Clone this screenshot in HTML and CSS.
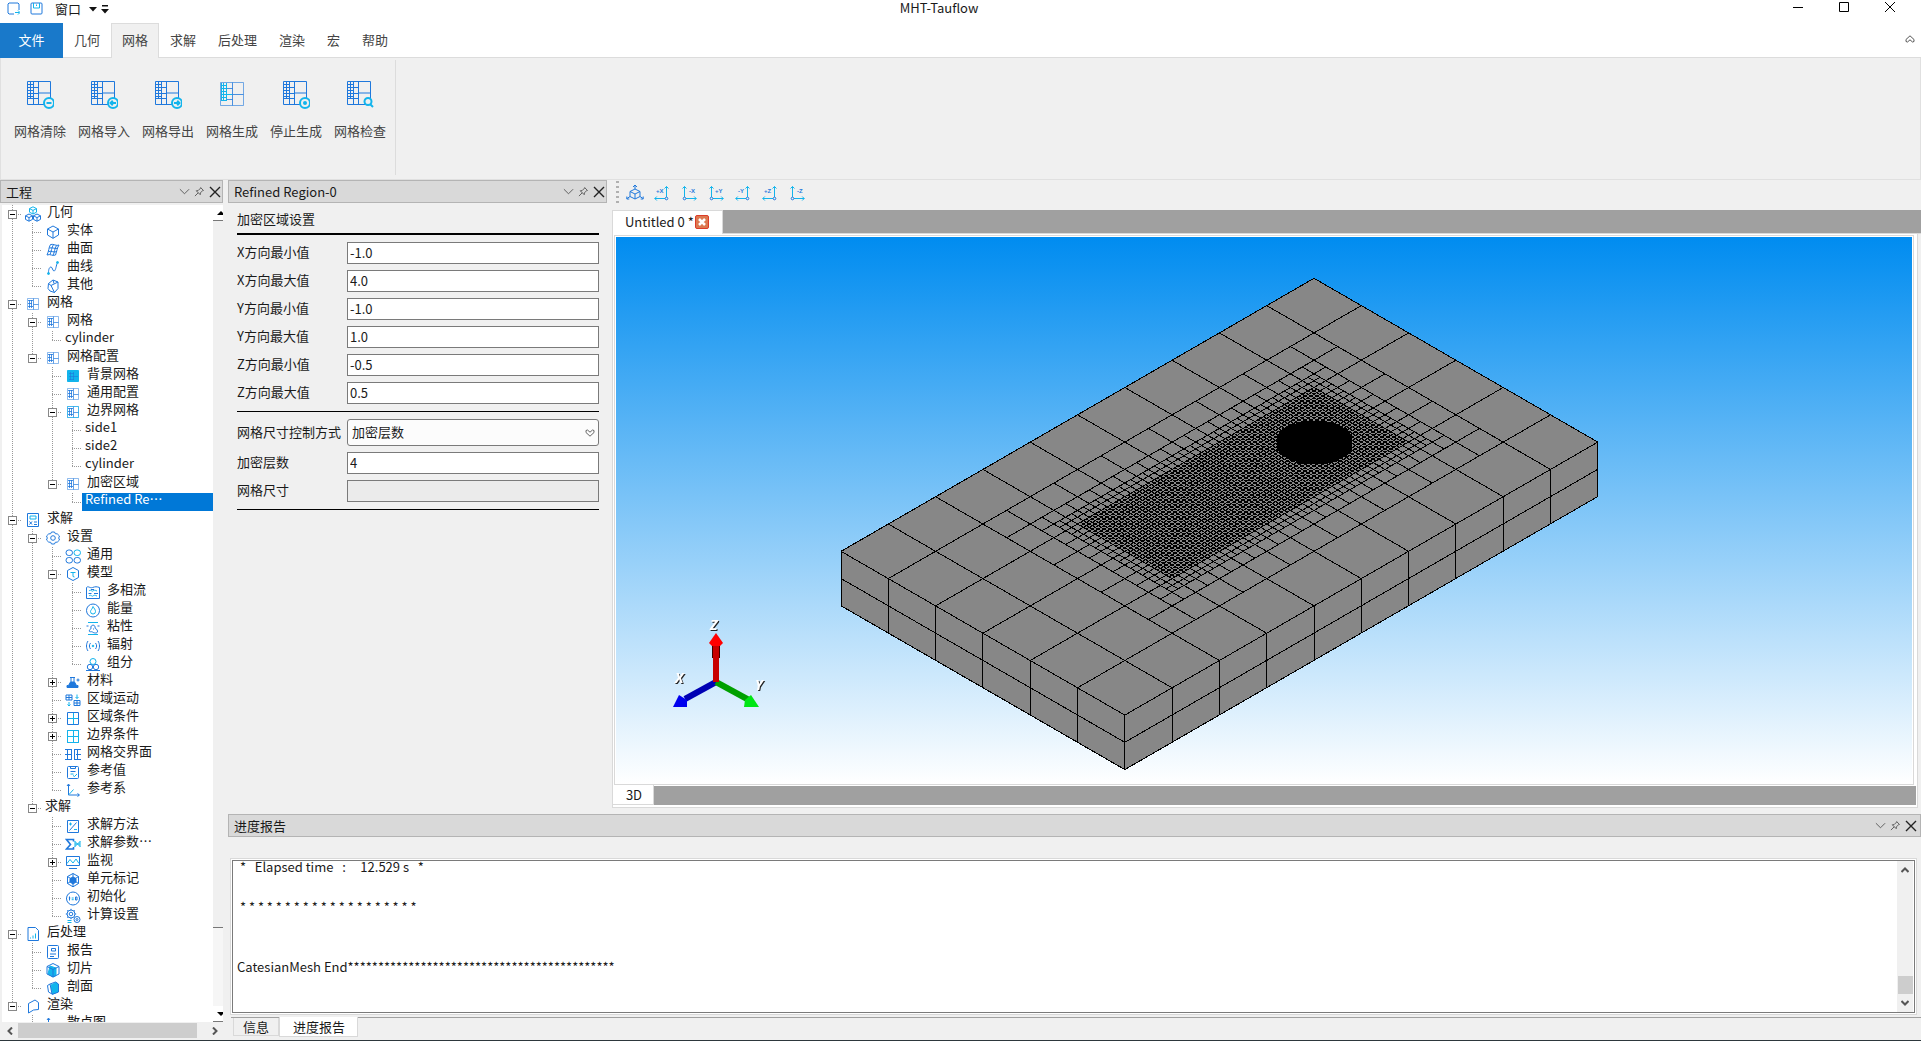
FILE: index.html
```html
<!DOCTYPE html>
<html lang="zh-CN">
<head>
<meta charset="utf-8">
<title>MHT-Tauflow</title>
<link rel="stylesheet" href="styles.css">
</head>
<body>
<svg class="sprite" aria-hidden="true">
  <symbol id="mesh-lg" viewBox="0 0 28 28"><path d="M1.500 .5 H24.500 V23.500 H1.500 Z M12.500 .5 V23.500 M7.500 .5 V23.500 M4.500 .5 V18 M12.500 12 H24.500 M1.500 6.500 H12.500 M1.500 17.500 H12.500 M1.500 3.500 H7.500 M1.500 9.500 H7.500 M1.500 12.500 H12.500 M1.500 15.500 H7.500"/></symbol>
  <symbol id="mesh-sm" viewBox="0 0 16 16"><path d="M2.500 2.500h11v11h-11z" opacity=".5"/><path d="M8.500 2.500v11M8.500 8.500h5" opacity=".7"/><path d="M3 4.500h5M3 7.500h4M3 10.500h5M4.500 4v8M6.500 4v8" opacity=".8"/></symbol>
  <symbol id="chev" viewBox="0 0 12 12"><path d="M1 3.500l5 5 5-5"/></symbol>
  <symbol id="pin" viewBox="0 0 12 12"><path d="M7 1.500l3.500 3.500M7.500 2L4.500 5 2.500 5.200 6.800 9.500 7 7.500 10 4.500M4.500 7.500L1 11"/></symbol>
  <symbol id="close" viewBox="0 0 12 12"><path d="M1 1l10 10M11 1L1 11"/></symbol>
  <symbol id="cubes" viewBox="0 0 16 16"><path class="cy" d="M8 .8l3.500 1.800v3.600L8 8 4.500 6.200V2.600zM4.500 2.600L8 4.400l3.500-1.800M8 4.400V8"/><path d="M4 8l3.500 1.800v3.600L4 15.200.5 13.400V9.800zM.5 9.800L4 11.600l3.500-1.800M4 11.600v3.600M12 8l3.500 1.800v3.600L12 15.200l-3.500-1.800V9.800zM8.500 9.800l3.500 1.800 3.500-1.800M12 11.600v3.600"/></symbol>
  <symbol id="cube" viewBox="0 0 16 16"><path d="M8 2l5.500 3v6L8 14.300 2.500 11V5zM2.500 5L8 8l5.500-3M8 8v6.300"/></symbol>
  <symbol id="surface" viewBox="0 0 16 16"><path d="M5.500 2.500c3-1 6 2 8.500.5-2 3-2 6-3.500 10-3 1.500-5-1.500-8.500 0 2-4 1.500-7 3.500-10.500zM8.500 2.500c-2 3-2 7-3.500 10M11.500 3.500c-2 3-2 7-3.500 10M4.500 6c3-1 6 1.500 8.500 0M3.500 9.500c3-1 5.500 1.500 8.500 0"/></symbol>
  <symbol id="curve" viewBox="0 0 16 16"><path d="M3.500 13c0-4 1-6 2.500-6s1.500 4 3 4S11 7 12 3.500"/><circle class="cf" cx="3.500" cy="13.500" r="1"/><circle class="cf" cx="12.500" cy="2.500" r="1"/></symbol>
  <symbol id="other" viewBox="0 0 16 16"><path d="M3.500 5.500L8 2l5 2v6.500L9.500 14.500 5 13 3 10.500zM3.500 5.500L6 7.500 9.500 14.500M6 7.500l7-3.500M8 2l1 3.500"/></symbol>
  <symbol id="calc" viewBox="0 0 16 16"><path d="M2.500 1.500h11v13h-11z"/><path class="cy" d="M5 4h6v3H5z"/><path d="M4.500 9.500l2.500 3M7 9.500l-2.500 3M9 10h3M9 12.500h3"/></symbol>
  <symbol id="gear" viewBox="0 0 16 16"><path d="M6.500 2h3l.8 1.700 2 .2L14.500 6l-.8 2 .8 2-2.200 2.100-2 .2L9.500 14h-3l-.8-1.700-2-.2L1.500 10l.8-2-.8-2 2.200-2.100 2-.2z"/><circle cx="8" cy="8" r="2.300"/></symbol>
  <symbol id="rings" viewBox="0 0 16 16"><rect x="1" y="2" width="6.500" height="5.500" rx="2.700"/><rect class="cy" x="9" y="2" width="6.500" height="5.500" rx="2.700"/><rect x="1" y="9.500" width="6.500" height="5.500" rx="2.700"/><rect x="9" y="9.500" width="6.500" height="5.500" rx="2.700"/></symbol>
  <symbol id="model" viewBox="0 0 16 16"><path d="M8 1.500l5.500 3v7L8 14.500l-5.500-3v-7z"/><path class="cy" d="M5.500 6.500h5M8 6.500v4l1.500.5"/></symbol>
  <symbol id="multi" viewBox="0 0 16 16"><path d="M1.500 3.500c2-2 3 1 6 0s4-1 7 0v11h-13z"/><path class="cy" d="M4 7c2-2 3 1 4 0s2-1 4 0M4 12c2-2 3 1 4 0s2-1 4 0"/><path d="M3.500 9.500h3M9 9.500h4M6 5.500h3"/></symbol>
  <symbol id="energy" viewBox="0 0 16 16"><circle cx="8" cy="8.500" r="6.500"/><path class="cy" d="M8 4.500c1 2 2.500 3 2.500 5A2.500 2.500 0 0 1 8 12a2.500 2.500 0 0 1-2.500-2.500C5.500 8 7.500 7 8 4.500z"/></symbol>
  <symbol id="viscous" viewBox="0 0 16 16"><path class="cy" d="M3 2.500h10M3 14.500h10"/><path d="M6 8c-1-3 4-4 4-1s2 1 2.500 4-4 2-5 1-4 1-3-2c.5-1 1.500-.5 1.500-2zM1.500 6h2M12.500 6h2M8 9h1"/></symbol>
  <symbol id="radiate" viewBox="0 0 16 16"><circle class="cf" cx="8" cy="8" r=".8"/><path d="M5.500 5c-1.500 2-1.500 4 0 6M10.500 5c1.500 2 1.500 4 0 6M3 3c-2 3-2 7 0 10M13 3c2 3 2 7 0 10"/></symbol>
  <symbol id="species" viewBox="0 0 16 16"><circle class="cy" cx="8" cy="5.500" r="3"/><circle cx="5" cy="11" r="2.700"/><circle cx="11" cy="11" r="2.700"/><path d="M1 14.500h14"/></symbol>
  <symbol id="material" viewBox="0 0 16 16"><path d="M5 3.500h5M6 4v4M9 4v4M11.500 6h3M13 4.500v3"/><path class="bf" d="M5.500 8h4l2 3.500H13v2H2v-2h1.500z"/></symbol>
  <symbol id="motion" viewBox="0 0 16 16"><path d="M1 3h6v5H1zM4 3v5M1 5.500h6M9 8.500h6v5H9zM12 8.500v5M9 11h6"/><path class="cy" d="M4 10v4M2.500 12.500L4 14l1.500-1.500M12 2.500v4M10.500 5L12 6.500 13.500 5"/></symbol>
  <symbol id="window" viewBox="0 0 16 16"><path d="M2.500 2.500h11v12h-11z"/><path class="cy" d="M8.500 3v11M3 8.500h10"/></symbol>
  <symbol id="interface" viewBox="0 0 16 16"><path d="M0 3.500h7M0 8.500h7M0 13.500h7M2.500 3.500v10M6.500 3.500v10M9.500 3v11M9.500 3.500H16M11 8.500h5M9.500 13.500H16M12.500 3.500v10"/></symbol>
  <symbol id="refval" viewBox="0 0 16 16"><rect x="2.500" y="2.500" width="11" height="12" rx="1"/><path d="M5.500 2.500v2h5v-2M5.500 7.500h5"/><path class="cy" d="M5.500 10h3M8 11.500l1.500 1 2.500-2.500"/></symbol>
  <symbol id="axes" viewBox="0 0 16 16"><path d="M3.500 2.500v10.500H14M2 4l1.500-2L5 4M12.500 11.500L14.500 13l-2 1.500"/><path class="cy" d="M4 12.500l4.500-5"/></symbol>
  <symbol id="method" viewBox="0 0 16 16"><path d="M2.500 2.500h11v12h-11zM4.500 12.500l7-8"/><path class="cy" d="M4 6h3M5.500 4.500v3M9 11.500h3"/></symbol>
  <symbol id="sigma" viewBox="0 0 16 16"><path d="M8.500 5.500V3.500H1.500L5.500 8.500l-4 4.500h7V11" stroke-width="1.600"/><path class="cy" d="M10 5.500l5 5M15 5.500l-5 5M10 5v6M15 5v6M10 8h5"/></symbol>
  <symbol id="monitor" viewBox="0 0 16 16"><path d="M1.500 2.500h13v9h-13zM4 14.500h8"/><path class="cy" d="M2 9.500l3-4 3 3.500 3-4 3 4.500"/></symbol>
  <symbol id="mark" viewBox="0 0 16 16"><path d="M8 1.500l5.500 3v7L8 14.800l-5.500-3.300v-7zM2.500 4.500l11 7M13.500 4.500l-11 7M8 1.500v13"/><path class="bf" d="M8 5l3 1.500v3.500L8 12l-3-2V6.500z"/></symbol>
  <symbol id="init" viewBox="0 0 16 16"><circle cx="8" cy="8.500" r="6.500"/><path d="M1 8.500h1M14 8.500h1M4.500 6.500v4M3.800 8h1.500M10.500 7h1.500v3h-1.500z"/><path class="cy" d="M6.700 8h2M6.700 9.700h2"/></symbol>
  <symbol id="gears" viewBox="0 0 16 16"><circle cx="6" cy="6" r="4"/><circle cx="6" cy="6" r="1.800"/><path d="M6 .8V2M6 10v1.200M.8 6H2M10 6h1.200M2.300 2.300l.9.900M9.700 2.300l-.9.900M2.300 9.700l.9-.9"/><circle cx="12" cy="11.500" r="3"/><circle cx="12" cy="11.500" r="1"/><path class="cy" d="M2.500 12.500h4M2.500 14.500h4"/></symbol>
  <symbol id="post" viewBox="0 0 16 16"><path d="M3 1.500h7.500l3 3v10H3z"/><path class="cf" d="M5.500 11.500v1M8 9.500v3M10.500 7.500v5"/></symbol>
  <symbol id="report" viewBox="0 0 16 16"><rect x="2.500" y="1.500" width="11" height="13" rx="1"/><path d="M5 10h6M5 12.500h4M6.500 4.500h4V7h-4z"/></symbol>
  <symbol id="slice" viewBox="0 0 16 16"><path class="cf" d="M5 4l6 2v7.500L8 15l-5-3z"/><path d="M8 1.500L14 4.500v7.500l-6 3-6-3V4.500zM2 4.500l6 3 6-3M8 7.500v7.500"/></symbol>
  <symbol id="section" viewBox="0 0 16 16"><path class="cf" d="M6 5l5-2.500 2 1.500v8L7.500 14z"/><path d="M2.500 5.500L5 4l2 10-3.500-2zM5 4l5.500-2 3 2v8L7 14.500"/></symbol>
  <symbol id="render" viewBox="0 0 16 16"><path d="M3.500 5.500L10 2l3.500 2.500v7l-5 .5-5 3z"/></symbol>
</svg>

<header class="titlebar">
  <div class="quick">
    <svg class="qicon" viewBox="0 0 13 13"><path d="M7 12H2L1 11V2l1-1h9l1 1v6"/><path class="cy" d="M8 10.500h4.500M11 8.500l2 2-2 2"/></svg>
    <svg class="qicon" viewBox="0 0 13 13"><rect x="1" y="1" width="11" height="11" rx="1"/><path class="cy" d="M3.500 1v5h6V1M6.500 2.500V4"/></svg>
    <span class="quick-label">窗口</span>
    <svg class="qarrow" viewBox="0 0 8 12"><path d="M0 4h8L4 8.500z"/></svg>
    <svg class="qarrow" viewBox="0 0 8 12"><path d="M1 2h6v1.500H1zM0 6h8l-4 4.500z"/></svg>
  </div>
  <h1 class="title">MHT-Tauflow</h1>
  <div class="winbtns">
    <button aria-label="最小化"><svg viewBox="0 0 12 12"><path d="M1 6.500h10"/></svg></button>
    <button aria-label="最大化"><svg viewBox="0 0 12 12"><path d="M1.500 1.500h9v9h-9z"/></svg></button>
    <button aria-label="关闭"><svg><use href="#close"/></svg></button>
  </div>
</header>

<nav class="menu">
  <button class="file">文件</button>
  <button>几何</button>
  <button class="on">网格</button>
  <button>求解</button>
  <button>后处理</button>
  <button>渲染</button>
  <button>宏</button>
  <button>帮助</button>
  <span class="fill"></span>
  <svg class="collapse" viewBox="0 0 10 8"><path d="M1 4.500L5 .8l4 3.700v2L7.500 7 5 4.800 2.500 7 1 6.500z"/></svg>
</nav>

<section class="ribbon">
  <div class="group">
    <button><svg class="rib" viewBox="0 0 28 28"><use href="#mesh-lg"/><g class="badge"><circle cx="23" cy="22" r="5"/><path d="M20.500 22h5"/></g></svg>网格清除</button>
    <button><svg class="rib" viewBox="0 0 28 28"><use href="#mesh-lg"/><g class="badge"><circle cx="23" cy="22" r="5"/><path d="M20.500 22h5.500M22.800 19.700L20.500 22l2.300 2.300"/></g></svg>网格导入</button>
    <button><svg class="rib" viewBox="0 0 28 28"><use href="#mesh-lg"/><g class="badge"><circle cx="23" cy="22" r="5"/><path d="M20 22h5.500M23.200 19.700l2.300 2.300-2.300 2.300"/></g></svg>网格导出</button>
    <button><svg class="rib" viewBox="0 0 28 28"><path d="M2.500 1.500 H25.500 V24.500 H2.500 Z" opacity=".6"/><path d="M14.500 1.500 V24.500 M14.500 13.500 H25.500 M8.500 7.500 H14.500 M8.500 18.500 H14.500" opacity=".8"/><path class="cy" d="M8.500 2 V19 M5.500 2 V19 M3.500 2 V19 M3 4.500 H9 M3 7.500 H9 M3 10.500 H9 M3 13.500 H14 M3 16.500 H9 M3 19.500 H9"/></svg>网格生成</button>
    <button><svg class="rib" viewBox="0 0 28 28"><use href="#mesh-lg"/><g class="badge"><circle cx="23" cy="22" r="5"/><circle class="cf" cx="23" cy="22" r="2"/></g></svg>停止生成</button>
    <button><svg class="rib" viewBox="0 0 28 28"><use href="#mesh-lg"/><g class="badge"><circle cx="22" cy="20.500" r="3.500"/><path d="M24.500 23.500l2.500 2.500"/></g></svg>网格检查</button>
  </div>
</section>

<main class="work">
  <aside class="dock project">
    <header class="dock-head"><h2>工程</h2><button aria-label="菜单"><svg><use href="#chev"/></svg></button><button aria-label="固定"><svg><use href="#pin"/></svg></button><button aria-label="关闭" class="x"><svg><use href="#close"/></svg></button></header>
    <div class="tree-wrap">
      <div class="tree-view">
      <ul class="tree">
        <li><div class="row"><button class="exp minus" aria-label="折叠"></button><svg><use href="#cubes"/></svg><span>几何</span></div>
          <ul>
            <li><div class="row"><i></i><svg><use href="#cube"/></svg><span>实体</span></div></li>
            <li><div class="row"><i></i><svg><use href="#surface"/></svg><span>曲面</span></div></li>
            <li><div class="row"><i></i><svg><use href="#curve"/></svg><span>曲线</span></div></li>
            <li><div class="row"><i></i><svg><use href="#other"/></svg><span>其他</span></div></li>
          </ul></li>
        <li><div class="row"><button class="exp minus" aria-label="折叠"></button><svg><use href="#mesh-sm"/></svg><span>网格</span></div>
          <ul>
            <li><div class="row"><button class="exp minus" aria-label="折叠"></button><svg><use href="#mesh-sm"/></svg><span>网格</span></div>
              <ul><li><div class="row"><i></i><span class="bare">cylinder</span></div></li></ul></li>
            <li><div class="row"><button class="exp minus" aria-label="折叠"></button><svg><use href="#mesh-sm"/></svg><span>网格配置</span></div>
              <ul>
                <li><div class="row"><i></i><svg viewBox="0 0 16 16"><path class="cf" d="M2.500 2.500h11v11h-11z"/><path d="M4 5.500h5M4 8.500h9M4 11.500h5M5.500 4v8M8.500 4v8" opacity=".6"/></svg><span>背景网格</span></div></li>
                <li><div class="row"><i></i><svg><use href="#mesh-sm"/></svg><span>通用配置</span></div></li>
                <li><div class="row"><button class="exp minus" aria-label="折叠"></button><svg viewBox="0 0 16 16"><use href="#mesh-sm"/><path class="cy" d="M2.500 2.500h11v11h-11z" opacity=".6"/></svg><span>边界网格</span></div>
                  <ul>
                    <li><div class="row"><i></i><span class="bare">side1</span></div></li>
                    <li><div class="row"><i></i><span class="bare">side2</span></div></li>
                    <li><div class="row"><i></i><span class="bare">cylinder</span></div></li>
                  </ul></li>
                <li><div class="row"><button class="exp minus" aria-label="折叠"></button><svg><use href="#mesh-sm"/></svg><span>加密区域</span></div>
                  <ul><li><div class="row"><i></i><span class="bare selected">Refined Re⋯</span></div></li></ul></li>
              </ul></li>
          </ul></li>
        <li><div class="row"><button class="exp minus" aria-label="折叠"></button><svg><use href="#calc"/></svg><span>求解</span></div>
          <ul>
            <li><div class="row"><button class="exp minus" aria-label="折叠"></button><svg><use href="#gear"/></svg><span>设置</span></div>
              <ul>
                <li><div class="row"><i></i><svg><use href="#rings"/></svg><span>通用</span></div></li>
                <li><div class="row"><button class="exp minus" aria-label="折叠"></button><svg><use href="#model"/></svg><span>模型</span></div>
                  <ul>
                    <li><div class="row"><i></i><svg><use href="#multi"/></svg><span>多相流</span></div></li>
                    <li><div class="row"><i></i><svg><use href="#energy"/></svg><span>能量</span></div></li>
                    <li><div class="row"><i></i><svg><use href="#viscous"/></svg><span>粘性</span></div></li>
                    <li><div class="row"><i></i><svg><use href="#radiate"/></svg><span>辐射</span></div></li>
                    <li><div class="row"><i></i><svg><use href="#species"/></svg><span>组分</span></div></li>
                  </ul></li>
                <li><div class="row"><button class="exp plus" aria-label="展开"></button><svg><use href="#material"/></svg><span>材料</span></div></li>
                <li><div class="row"><i></i><svg><use href="#motion"/></svg><span>区域运动</span></div></li>
                <li><div class="row"><button class="exp plus" aria-label="展开"></button><svg><use href="#window"/></svg><span>区域条件</span></div></li>
                <li><div class="row"><button class="exp plus" aria-label="展开"></button><svg viewBox="0 0 16 16"><use href="#window"/><path class="cy" d="M2.500 2.500h11v12h-11z"/></svg><span>边界条件</span></div></li>
                <li><div class="row"><i></i><svg><use href="#interface"/></svg><span>网格交界面</span></div></li>
                <li><div class="row"><i></i><svg><use href="#refval"/></svg><span>参考值</span></div></li>
                <li><div class="row"><i></i><svg><use href="#axes"/></svg><span>参考系</span></div></li>
              </ul></li>
            <li><div class="row"><button class="exp minus" aria-label="折叠"></button><span class="bare">求解</span></div>
              <ul>
                <li><div class="row"><i></i><svg><use href="#method"/></svg><span>求解方法</span></div></li>
                <li><div class="row"><i></i><svg><use href="#sigma"/></svg><span>求解参数⋯</span></div></li>
                <li><div class="row"><button class="exp plus" aria-label="展开"></button><svg><use href="#monitor"/></svg><span>监视</span></div></li>
                <li><div class="row"><i></i><svg><use href="#mark"/></svg><span>单元标记</span></div></li>
                <li><div class="row"><i></i><svg><use href="#init"/></svg><span>初始化</span></div></li>
                <li><div class="row"><i></i><svg><use href="#gears"/></svg><span>计算设置</span></div></li>
              </ul></li>
          </ul></li>
        <li><div class="row"><button class="exp minus" aria-label="折叠"></button><svg><use href="#post"/></svg><span>后处理</span></div>
          <ul>
            <li><div class="row"><i></i><svg><use href="#report"/></svg><span>报告</span></div></li>
            <li><div class="row"><i></i><svg><use href="#slice"/></svg><span>切片</span></div></li>
            <li><div class="row"><i></i><svg><use href="#section"/></svg><span>剖面</span></div></li>
          </ul></li>
        <li><div class="row"><button class="exp minus" aria-label="折叠"></button><svg><use href="#render"/></svg><span>渲染</span></div>
          <ul><li><div class="row"><i></i><svg><use href="#axes"/></svg><span>散点图</span></div></li></ul></li>
      </ul>
      </div>
      <div class="vbar">
        <span class="vbtn"><svg viewBox="0 0 8 4"><path d="M4 0l4 4H0z"/></svg></span>
        <span class="vthumb"></span>
        <span class="vtrack"></span>
        <span class="vbtn"><svg viewBox="0 0 8 4"><path d="M4 4l4-4H0z"/></svg></span>
      </div>
    </div>
    <div class="hbar"><svg viewBox="0 0 8 8"><path d="M6 .5L2.500 4 6 7.500"/></svg><span></span><svg viewBox="0 0 8 8"><path d="M2 .5L5.500 4 2 7.500"/></svg></div>
  </aside>

  <div class="right">
    <div class="upper">
      <section class="dock props">
        <header class="dock-head"><h2>Refined Region-0</h2><button aria-label="菜单"><svg><use href="#chev"/></svg></button><button aria-label="固定"><svg><use href="#pin"/></svg></button><button aria-label="关闭" class="x"><svg><use href="#close"/></svg></button></header>
        <form class="form">
          <h3>加密区域设置</h3>
          <div class="fields">
            <label for="xmin">X方向最小值</label><input id="xmin" value="-1.0">
            <label for="xmax">X方向最大值</label><input id="xmax" value="4.0">
            <label for="ymin">Y方向最小值</label><input id="ymin" value="-1.0">
            <label for="ymax">Y方向最大值</label><input id="ymax" value="1.0">
            <label for="zmin">Z方向最小值</label><input id="zmin" value="-0.5">
            <label for="zmax">Z方向最大值</label><input id="zmax" value="0.5">
          </div>
          <div class="fields">
            <label for="mode">网格尺寸控制方式</label>
            <div class="combo"><select id="mode"><option>加密层数</option></select><svg viewBox="0 0 10 8"><path d="M1 3.500L5 7.200l4-3.700v-2L7.500 1 5 3.200 2.500 1 1 1.500z"/></svg></div>
            <label for="layers">加密层数</label><input id="layers" value="4">
            <label for="size">网格尺寸</label><input id="size" disabled>
          </div>
        </form>
      </section>

      <section class="view">
        <div class="viewbar">
          <span class="grip"></span>
          <button aria-label="等轴测"><svg class="iso" viewBox="0 0 18 18"><path d="M9 5l5 2.500v5L9 15l-5-2.500v-5zM4 7.500l5 2.500 5-2.500M9 10v5M9 5V1.500M7 3l2-2 2 2M4 12.500L1 14.500M.8 12.500v2.500h2.500M14 12.500l3 2M17.200 12.500v2.500h-2.500"/></svg></button>
          <button aria-label="+X"><svg viewBox="0 0 16 16"><path class="cy" d="M12.500 12V1.500M10.500 3.500l2-2 2 2M11 13.500H.8M2.800 11.500l-2 2 2 2"/><circle cx="12.500" cy="13.500" r="1.300"/><text x="2" y="8">+X</text></svg></button>
          <button aria-label="-X"><svg viewBox="0 0 16 16"><path class="cy" d="M3.500 12V1.500M1.500 3.500l2-2 2 2M5 13.500h10.200M13.200 11.500l2 2-2 2"/><circle cx="3.500" cy="13.500" r="1.300"/><text x="8" y="8">-X</text></svg></button>
          <button aria-label="+Y"><svg viewBox="0 0 16 16"><path class="cy" d="M3.500 12V1.500M1.500 3.500l2-2 2 2M5 13.500h10.200M13.200 11.500l2 2-2 2"/><circle cx="3.500" cy="13.500" r="1.300"/><text x="7" y="8">+Y</text></svg></button>
          <button aria-label="-Y"><svg viewBox="0 0 16 16"><path class="cy" d="M12.500 12V1.500M10.500 3.500l2-2 2 2M11 13.500H.8M2.800 11.500l-2 2 2 2"/><circle cx="12.500" cy="13.500" r="1.300"/><text x="3" y="8">-Y</text></svg></button>
          <button aria-label="+Z"><svg viewBox="0 0 16 16"><path class="cy" d="M12.500 12V1.500M10.500 3.500l2-2 2 2M11 13.500H.8M2.800 11.500l-2 2 2 2"/><circle cx="12.500" cy="13.500" r="1.300"/><text x="2" y="8">+Z</text></svg></button>
          <button aria-label="-Z"><svg viewBox="0 0 16 16"><path class="cy" d="M3.500 12V1.500M1.500 3.500l2-2 2 2M5 13.500h10.200M13.200 11.500l2 2-2 2"/><circle cx="3.500" cy="13.500" r="1.300"/><text x="8" y="8">-Z</text></svg></button>
        </div>
        <div class="doc">
          <div class="doc-tabs"><div class="doc-tab">Untitled 0 *<button aria-label="关闭"><svg viewBox="0 0 12 12"><path d="M3 3l6 6M9 3l-6 6"/></svg></button></div></div>
          <div class="doc-body">
            <div class="canvas">
              <svg class="mesh" viewBox="0 0 1296 547">
                <path class="solid" d="M698 41.300L981.800 205.100v54.400L508.800 532.600 225 368.800v-54.400z"/>
                <path id="mesh-lines"/>
                <path class="hole" d="M686 184h24v1h6v2h6v2h4v2h4v3h3v3h2v16h-2v3h-3v3h-4v2h-4v2h-6v2h-6v1h-24v-1h-6v-2h-6v-2h-4v-2h-4v-3h-3v-3h-2v-16h2v-3h3v-3h4v-2h4v-2h6v-2h6z"/>
              </svg>
              <svg class="triad" viewBox="0 0 104 100">
                <path d="M46 30h8v13h-8z" fill="#400000"/>
                <path d="M50 67L19 84" stroke="#0000b4" stroke-width="6"/>
                <path d="M50 67l33 18" stroke="#00a000" stroke-width="6"/>
                <path d="M50 67V28" stroke="#c80000" stroke-width="6"/>
                <path d="M50 18l7 10-3 3h-8l-3-3z" fill="#f00"/>
                <path d="M7 92l6-12 8 5v7z" fill="#0000ee"/>
                <path d="M93 92l-8-12-6 5-1 7z" fill="#00e614"/>
                <text x="44" y="15">Z</text><text x="9" y="68">X</text><text x="89" y="75">Y</text>
              </svg>
            </div>
          </div>
          <div class="doc-foot"><button>3D</button><span></span></div>
        </div>
      </section>
    </div>

    <section class="dock report">
      <header class="dock-head"><h2>进度报告</h2><button aria-label="菜单"><svg><use href="#chev"/></svg></button><button aria-label="固定"><svg><use href="#pin"/></svg></button><button aria-label="关闭" class="x"><svg><use href="#close"/></svg></button></header>
      <div class="log-frame">
        <div class="log" role="log">
<pre> *   Elapsed time   :     12.529 s   *

 * * * * * * * * * * * * * * * * * * * *


CatesianMesh End********************************************</pre>
          <div class="log-bar"><svg viewBox="0 0 8 8"><path d="M.5 6L4 2.500 7.500 6"/></svg><span></span><svg viewBox="0 0 8 8"><path d="M.5 2L4 5.500 7.500 2"/></svg></div>
        </div>
      </div>
      <div class="log-tabs"><button>信息</button><button class="on">进度报告</button></div>
    </section>
  </div>
</main>
<script src="mesh.js"></script>
</body>
</html>
```
FILE: styles.css
```css
* { box-sizing: border-box; }
body {
  margin: 0;
  height: 100vh;
  display: flex;
  flex-direction: column;
  overflow: hidden;
  background: #f0f0f0;
  border-bottom: 1px solid #2d373c;
  color: #1a1a1a;
  font: 13px/18px "Noto Sans CJK SC", "Noto Sans", sans-serif;
}
button, input, select { font: inherit; color: inherit; }
button { border: 0; padding: 0; background: none; }
h1, h2, h3, ul, pre { margin: 0; padding: 0; font: inherit; }
ul { list-style: none; }
svg { display: block; fill: none; stroke: #1f78dc; stroke-width: 1; flex: none; }
.sprite { width: 0; height: 0; position: absolute; }
.cy { stroke: #12b4ec; }
.cf { fill: #12b4ec; stroke: #12b4ec; }
.bf { fill: #1f78dc; }

/* title bar */
.titlebar { display: flex; height: 23px; background: #fff; }
.quick { display: flex; align-items: center; padding: 0 0 6px 7px; }
.qicon { width: 13px; height: 13px; margin-right: 10px; }
.quick-label { margin: 0 8px 0 2px; }
.qarrow { width: 8px; height: 12px; margin-right: 4px; fill: #111; stroke: none; }
.title { flex: 1; padding-right: 10px; text-align: center; line-height: 16px; }
.winbtns { display: flex; padding-right: 8px; }
.winbtns button { width: 46px; display: flex; justify-content: center; padding-top: 1px; }
.winbtns svg { width: 12px; height: 12px; stroke: #000; }

/* ribbon */
.menu { display: flex; height: 35px; background: #fff; color: #444; }
.menu button { padding: 0 11px 1px; border-bottom: 1px solid #dcdcdc; }
.menu .file { width: 63px; background: #1979ca; border: 0; padding-bottom: 2px; color: #fff; }
.menu .on { padding: 0 10px 2px; background: #f0f0f0; border: 1px solid #dcdcdc; border-bottom: 0; }
.fill { flex: 1; border-bottom: 1px solid #dcdcdc; }
.collapse { width: 16px; height: 35px; padding: 12px 6px 14px 0; stroke: #555; border-bottom: 1px solid #dcdcdc; }
.ribbon { height: 122px; padding: 2px 0 3px 7px; border: 1px solid #e0e0e0; border-top: 0; box-shadow: inset 0 -2px #f0f0f0; }
.group { display: flex; width: 388px; height: 115px; border-right: 1px solid #dcdcdc; color: #444; }
.group button { width: 64px; flex: none; display: flex; flex-direction: column; align-items: center; gap: 13px; padding: 21px 0 0 0; }
.rib { width: 28px; height: 28px; }
.badge { stroke: #12b4ec; stroke-width: 2; }
.badge circle { fill: #f0f0f0; }
.badge .cf { fill: #12b4ec; stroke: none; }

/* docks */
.work { flex: 1; min-height: 0; display: flex; gap: 5px; padding-bottom: 2px; }
.dock { display: flex; flex-direction: column; }
.dock-head { display: flex; align-items: center; gap: 4px; height: 23px; flex: none; padding: 0 1px 0 5px; background: #d9d9d9; border: 1px solid #b4b4b4; }
.dock-head h2 { flex: 1; line-height: 20px; }
.dock-head svg { width: 11px; height: 11px; stroke: #555; }
.dock-head .x svg { width: 12px; height: 12px; stroke: #222; stroke-width: 1.4; }
.project { width: 223px; flex: none; }
.tree-wrap { flex: 1; min-height: 0; display: flex; margin: 2px 0 0 2px; }
.tree-view { flex: 1; overflow: hidden; background: #fff; }
.tree { margin-left: -2px; }
.tree li {
  --dots: #999;
  background:
    repeating-linear-gradient(90deg, var(--dots) 0 1px, transparent 1px 2px) 12px 9px / 9px 1px no-repeat,
    repeating-linear-gradient(var(--dots) 0 1px, transparent 1px 2px) 12px 0 / 1px 100% no-repeat;
}
.tree li:last-child { background-size: 9px 1px, 1px 10px; }
.tree ul { margin-left: 20px; }
.row { display: flex; align-items: center; height: 18px; padding-left: 8px; white-space: nowrap; }
.row i { width: 9px; }
.exp { width: 9px; height: 9px; border: 1px solid #888; background: linear-gradient(#000, #000) center / 5px 1px no-repeat, #fff; }
.exp.plus { background: linear-gradient(#000, #000) center / 5px 1px no-repeat, linear-gradient(#000, #000) center / 1px 5px no-repeat, #fff; }
.row svg { width: 16px; height: 16px; margin: 0 6px 0 8px; }
.row span { height: 18px; line-height: 12px; }
.row .bare { margin-left: 8px; }
.row .selected { flex: 1; margin-left: 5px; padding-left: 3px; background: #0078d7; color: #fff; }
.vbar { width: 10px; display: flex; flex-direction: column; overflow: hidden; }
.vbtn { width: 15px; height: 16px; display: grid; place-content: center; background: #fff; border-bottom: 1px solid #777; }
.vbtn svg { width: 8px; height: 4px; fill: #000; stroke: none; }
.vthumb { flex: 9; border-bottom: 1px solid #777; }
.vtrack { flex: 1; background: #f6f6f6; }
.hbar, .log-bar { display: flex; align-items: center; background: #f0f0f0; }
.hbar { height: 15px; margin: 1px 0 0 2px; padding: 0 4px; gap: 4px; }
.hbar span { flex: 1; margin-right: 10px; height: 15px; background: #cdcdcd; }
.hbar svg, .log-bar svg { width: 8px; height: 8px; stroke: #555; stroke-width: 2; }
.right { flex: 1; min-width: 0; display: flex; flex-direction: column; gap: 6px; }
.upper { flex: 1; min-height: 0; display: flex; gap: 5px; }

/* property form */
.props { width: 379px; flex: none; }
.form { padding: 6px 8px 0 9px; }
.form h3 { padding: 1px 0 5px; border-bottom: 2px solid #000; line-height: 18px; }
.fields { display: grid; grid-template-columns: 1fr 252px; gap: 6px 0; align-items: center; padding: 7px 0; border-bottom: 1px solid #000; }
.fields label { line-height: 16px; padding-bottom: 2px; }
.fields input { width: 100%; height: 22px; padding: 0 2px 1px; border: 1px solid #7a7a7a; background: #fff; }
.fields input:disabled { background: #ebebeb; }
.combo { display: grid; align-items: center; }
.combo select { grid-area: 1 / 1; height: 27px; padding: 0 4px 1px; appearance: none; border: 1px solid #7a7a7a; border-radius: 3px; background: #fcfcfc; }
.combo svg { grid-area: 1 / 1; justify-self: end; width: 10px; height: 8px; margin-right: 4px; stroke: #666; }

/* 3D view */
.view { flex: 1; min-width: 0; display: flex; flex-direction: column; }
.viewbar { display: flex; align-items: center; height: 30px; padding: 0 0 5px 4px; }
.grip { width: 3px; height: 23px; margin-right: 2px; background: repeating-linear-gradient(#b0b0b0 0 2px, transparent 2px 5px); }
.viewbar button { width: 27px; display: grid; place-content: center; }
.viewbar svg { width: 16px; height: 16px; }
.viewbar .iso { width: 18px; height: 18px; }
.viewbar text { font: bold 6px "Liberation Sans", sans-serif; fill: #1f78dc; stroke: none; }
.doc { flex: 1; min-height: 0; display: flex; flex-direction: column; border: 1px solid #d9d9d9; border-top: 0; background: #fff; margin-right: 3px; padding-bottom: 2px; }
.doc-tabs { height: 24px; margin-right: -4px; background: #a0a0a0; border-bottom: 1px solid #d9d9d9; }
.doc-tab { display: flex; align-items: center; justify-content: space-between; width: 110px; height: 24px; padding: 0 13px 2px 12px; background: #fff; border-right: 1px solid #d9d9d9; border-top: 1px solid #d9d9d9; }
.doc-tab button { width: 14px; height: 14px; border: 1px solid #dc3c28; border-radius: 2px; background: #dc7850; }
.doc-tab svg { width: 12px; height: 12px; stroke: #fff; stroke-width: 2.500; }
.doc-body { flex: 1; min-height: 0; display: flex; margin: 1px 3px 0 1px; padding: 1px 1px 0; border: 1px solid #d9d9d9; }
.canvas { flex: 1; position: relative; background: linear-gradient(#008cf0, #fff); }
.mesh { width: 100%; height: 100%; position: absolute; }
.mesh path { stroke: #000; vector-effect: non-scaling-stroke; shape-rendering: crispEdges; }
.mesh .solid { fill: #878787; }
.mesh .hole { fill: #000; }
.triad { position: absolute; left: 50px; bottom: 69px; width: 104px; height: 100px; stroke: none; }
.triad text { font: italic bold 14px "Noto Sans", sans-serif; fill: #fff; filter: drop-shadow(1px 1px 0 #222); }
.doc-foot { display: flex; height: 20px; }
.doc-foot button { width: 41px; padding-left: 2px; line-height: 18px; background: #fff; border-right: 1px solid #d9d9d9; border-bottom: 1px solid #d9d9d9; }
.doc-foot span { flex: 1; margin: 1px 1px 0 0; background: #a0a0a0; }

/* progress report */
.report .dock-head { padding-right: 3px; }
.log-frame { margin: 21px 4px 0 2px; padding: 1px; border: 1px solid #d9d9d9; background: #fff; }
.log { display: flex; height: 153px; overflow: hidden; border: 1px solid #7a7a7a; background: #fff; }
.log pre { flex: 1; margin-top: -4px; padding-left: 4px; line-height: 20px; white-space: pre; }
.log-bar { width: 17px; flex-direction: column; padding: 5px 0 5px; border-right: 1px solid #fff; }
.log-bar span { width: 15px; height: 18px; margin: auto 0 5px; background: #cdcdcd; }
.log-tabs { display: flex; align-items: flex-start; height: 21px; margin: 2px 0 0 3px; padding-left: 2px; border-top: 1px solid #a0a0a0; }
.log-tabs button { height: 18px; padding: 0 9px; line-height: 16px; border: 1px solid #d9d9d9; border-top: 0; }
.log-tabs .on { height: 20px; padding: 0 12px 0 13px; line-height: 18px; background: #fff; margin-top: -1px; }
```
FILE: mesh.js
```js
// Isometric box mesh: u runs from the far corner to the left, v to the right.
const CELLS_U = 10, CELLS_V = 6, LAYER = 27.2;
const point = (u, v, drop = 0) =>
  `${(698 + 47.3 * (v - u)).toFixed(1)} ${(41.3 + 27.3 * (u + v) + drop * LAYER).toFixed(1)}`;

// Each refinement level halves the cell size inside a smaller rectangle.
const levels = [
  { u: [0, 10], v: [0, 6], step: 1 },
  { u: [1, 8], v: [1, 5], step: 1 / 2 },
  { u: [1.5, 7.5], v: [1.5, 4.5], step: 1 / 4 },
  { u: [1.75, 7.25], v: [1.75, 4.25], step: 1 / 8 },
  { u: [2, 7], v: [2, 4], step: 1 / 16 }
];

let d = '';
for (const { u, v, step } of levels) {
  for (let i = u[0]; i <= u[1]; i += step) d += `M${point(i, v[0])}L${point(i, v[1])}`;
  for (let j = v[0]; j <= v[1]; j += step) d += `M${point(u[0], j)}L${point(u[1], j)}`;
}
for (let i = 0; i <= CELLS_U; i++) d += `M${point(i, CELLS_V)}L${point(i, CELLS_V, 2)}`;
for (let j = 0; j <= CELLS_V; j++) d += `M${point(CELLS_U, j)}L${point(CELLS_U, j, 2)}`;
for (const k of [1, 2]) d += `M${point(CELLS_U, 0, k)}L${point(CELLS_U, CELLS_V, k)}L${point(0, CELLS_V, k)}`;
document.getElementById('mesh-lines').setAttribute('d', d);
```
